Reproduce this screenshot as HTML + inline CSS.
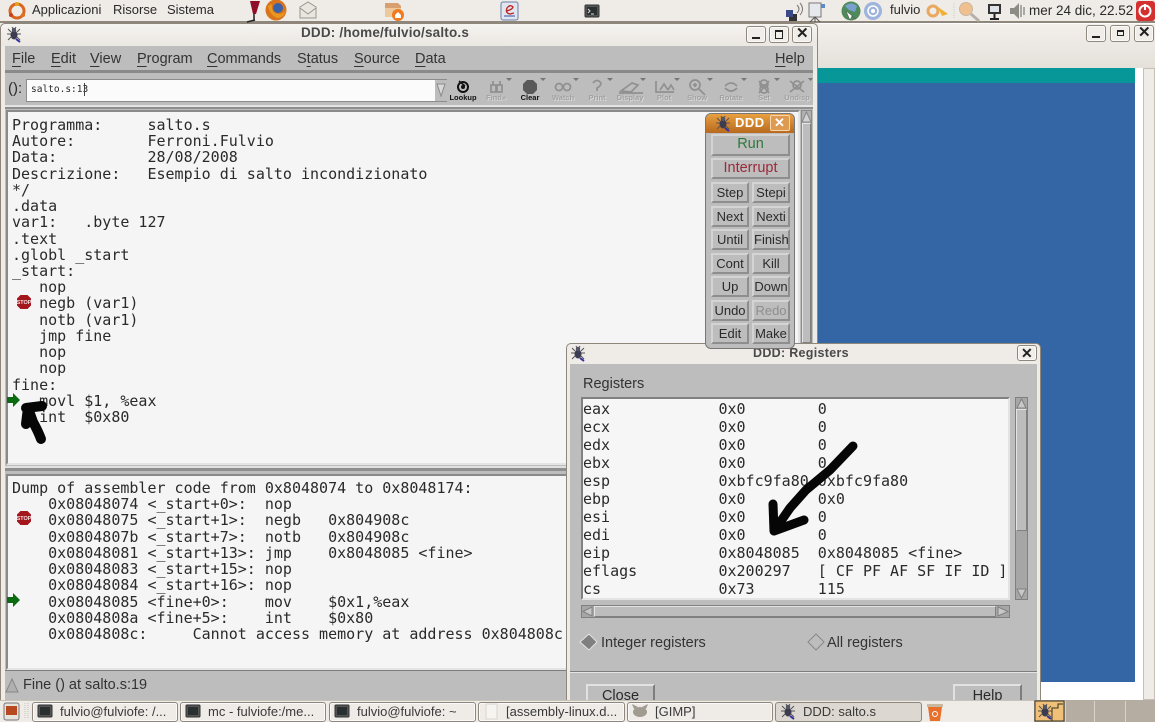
<!DOCTYPE html>
<html><head><meta charset="utf-8"><style>
html,body{margin:0;padding:0;background:#efebe7}
#r{position:relative;width:1155px;height:722px;overflow:hidden;background:#efebe7;font-family:"Liberation Sans",sans-serif;color:#2a2a2a}
#r div,#r pre,#r svg{position:absolute;margin:0;box-sizing:border-box}
.t{white-space:nowrap;line-height:16px}
pre{font-family:"DejaVu Sans Mono",monospace;font-size:15px;color:#2a2a2a}
.b{background:#bdbdbd;border:2px solid;border-color:#d4d4d4 #8e8e8e #8e8e8e #d4d4d4;text-align:center;font-size:13px;line-height:17px;color:#2a2a2a}
.wb{background:#f1eeea;border:1px solid #8e877d;border-radius:3px;box-shadow:inset 0 0 0 1px #fbfaf8}
.tb{top:702px;height:20px;background:#efebe7;border:1px solid #8e877d;border-radius:3px;box-shadow:inset 0 0 0 1px #fbfaf8;font-size:13px;line-height:18px;white-space:nowrap;color:#3a3a3a}
.tl{top:93px;width:44px;text-align:center;font-size:7.5px;font-weight:bold;line-height:9px;color:#a2a2a2;text-shadow:1px 1px 0 #d8d8d8}
.mn{top:51px;font-size:14.5px;color:#333}
u{text-underline-offset:3px}
</style></head><body><div id="r">

<!-- top panel -->
<div style="left:0;top:0;width:1155px;height:23px;background:#efebe7;border-bottom:2px solid #8f877b"></div>
<div class="t" style="left:32px;top:2px;font-size:13px">Applicazioni</div>
<div class="t" style="left:113px;top:2px;font-size:13px">Risorse</div>
<div class="t" style="left:167px;top:2px;font-size:13px">Sistema</div>
<div class="t" style="left:890px;top:2px;font-size:13px">fulvio</div>
<div class="t" style="left:1029px;top:3px;font-size:13.5px">mer 24 dic, 22.52</div>

<!-- back window -->
<div style="left:818px;top:23px;width:337px;height:677px;background:#fff"></div>
<div style="left:818px;top:24px;width:337px;height:44px;background:linear-gradient(#f3f0ec,#e4e0da)"></div>
<div style="left:818px;top:68px;width:317px;height:15px;background:#079799"></div>
<div style="left:818px;top:83px;width:317px;height:599px;background:#3465a4"></div>
<div style="left:1143px;top:68px;width:12px;height:632px;background:#efebe7;border:1px solid #c5c0b8"></div>
<div class="wb" style="left:1086px;top:25px;width:20px;height:17px"></div>
<div class="wb" style="left:1110px;top:25px;width:20px;height:17px"></div>
<div class="wb" style="left:1134px;top:25px;width:20px;height:17px"></div>
<div style="left:1092px;top:36px;width:8px;height:2px;background:#222"></div>
<div style="left:1117px;top:30px;width:7px;height:6px;border:1px solid #222;border-top-width:2px"></div>
<div class="t" style="left:1138px;top:25px;font-size:15px;font-weight:bold;color:#222">✕</div>

<!-- main window -->
<div style="left:0;top:23px;width:818px;height:679px;background:#efebe7;border:1px solid #8f877b;border-radius:5px 5px 0 0"></div>
<div style="left:1px;top:24px;width:816px;height:22px;background:linear-gradient(#f6f4f1,#ebe7e2);border-radius:5px 5px 0 0"></div>
<div class="t" style="left:301px;top:25px;width:200px;font-size:13.5px;font-weight:bold;color:#4a4a4a;letter-spacing:.18px">DDD: /home/fulvio/salto.s</div>
<div class="wb" style="left:746px;top:26px;width:20px;height:17px"></div>
<div class="wb" style="left:769px;top:26px;width:20px;height:17px"></div>
<div class="wb" style="left:792px;top:26px;width:20px;height:17px"></div>
<div style="left:752px;top:37px;width:8px;height:2px;background:#222"></div>
<div style="left:775px;top:30px;width:8px;height:9px;border:1px solid #222;border-top-width:2px"></div>
<div class="t" style="left:796px;top:26px;font-size:15px;font-weight:bold;color:#222">✕</div>

<div style="left:5px;top:46px;width:808px;height:654px;background:#bdbdbd"></div>
<div style="left:5px;top:70px;width:808px;height:3px;background:#8a8a8a"></div>
<div style="left:5px;top:105px;width:808px;height:2px;background:#e4e4e4"></div>
<div style="left:5px;top:107px;width:808px;height:2px;background:#8f8f8f"></div>
<div class="t mn" style="left:12px"><u>F</u>ile</div>
<div class="t mn" style="left:51px"><u>E</u>dit</div>
<div class="t mn" style="left:90px"><u>V</u>iew</div>
<div class="t mn" style="left:137px"><u>P</u>rogram</div>
<div class="t mn" style="left:207px"><u>C</u>ommands</div>
<div class="t mn" style="left:297px">S<u>t</u>atus</div>
<div class="t mn" style="left:354px"><u>S</u>ource</div>
<div class="t mn" style="left:415px"><u>D</u>ata</div>
<div class="t mn" style="left:775px"><u>H</u>elp</div>

<div class="t" style="left:8px;top:81px;font-size:15px">():</div>
<div style="left:26px;top:79px;width:421px;height:23px;background:#fbfbfb;border:1px solid #8c8c8c;border-right:0"></div>
<pre class="t" style="left:31px;top:82px;font-size:9.5px">salto.s:13</pre>
<div style="left:84px;top:83px;width:1px;height:13px;background:#444"></div>
<div style="left:435px;top:80px;width:12px;height:21px;background:#bdbdbd"></div>

<div class="tl" style="left:441px;color:#111;text-shadow:none">Lookup</div>
<div class="tl" style="left:474px">Find»</div>
<div class="tl" style="left:508px;color:#111;text-shadow:none">Clear</div>
<div class="tl" style="left:541px">Watch</div>
<div class="tl" style="left:575px">Print</div>
<div class="tl" style="left:608px">Display</div>
<div class="tl" style="left:642px">Plot</div>
<div class="tl" style="left:675px">Show</div>
<div class="tl" style="left:709px">Rotate</div>
<div class="tl" style="left:742px">Set</div>
<div class="tl" style="left:775px">Undisp</div>

<!-- source pane -->
<div style="left:6px;top:110px;width:794px;height:355px;background:#f5f5f5;border:2px solid;border-color:#8a8a8a #e4e4e4 #e4e4e4 #8a8a8a"></div>
<pre style="left:12px;top:117px;line-height:16.22px">Programma:     salto.s
Autore:        Ferroni.Fulvio
Data:          28/08/2008
Descrizione:   Esempio di salto incondizionato
*/
.data
var1:   .byte 127
.text
.globl _start
_start:
   nop
   negb (var1)
   notb (var1)
   jmp fine
   nop
   nop
fine:
   movl $1, %eax
   int  $0x80</pre>
<div style="left:801px;top:110px;width:11px;height:355px;background:#b0b0b0;border:1px solid #8a8a8a"></div>
<div style="left:802px;top:123px;width:9px;height:220px;background:#bdbdbd;border:1px solid;border-color:#e4e4e4 #808080 #808080 #e4e4e4"></div>
<div style="left:5px;top:466px;width:808px;height:2px;background:#e0e0e0"></div>
<div style="left:5px;top:468px;width:808px;height:3px;background:#8f8f8f"></div>

<!-- asm pane -->
<div style="left:6px;top:474px;width:794px;height:196px;background:#f5f5f5;border:2px solid;border-color:#8a8a8a #e4e4e4 #e4e4e4 #8a8a8a"></div>
<pre style="left:12px;top:480px;line-height:16.22px;width:552px;overflow:hidden">Dump of assembler code from 0x8048074 to 0x8048174:
    0x08048074 &lt;_start+0&gt;:  nop
    0x08048075 &lt;_start+1&gt;:  negb   0x804908c
    0x0804807b &lt;_start+7&gt;:  notb   0x804908c
    0x08048081 &lt;_start+13&gt;: jmp    0x8048085 &lt;fine&gt;
    0x08048083 &lt;_start+15&gt;: nop
    0x08048084 &lt;_start+16&gt;: nop
    0x08048085 &lt;fine+0&gt;:    mov    $0x1,%eax
    0x0804808a &lt;fine+5&gt;:    int    $0x80
    0x0804808c:     Cannot access memory at address 0x804808c</pre>
<div style="left:801px;top:474px;width:11px;height:196px;background:#b0b0b0;border:1px solid #8a8a8a"></div>
<div class="t" style="left:23px;top:677px;font-size:14.5px;color:#333">Fine () at salto.s:19</div>
<div style="left:5px;top:670px;width:808px;height:1px;background:#7d7d7d"></div>

<!-- registers window -->
<div style="left:566px;top:343px;width:475px;height:360px;background:#efebe7;border:1px solid #8f877b;border-radius:5px 5px 0 0"></div>
<div style="left:570px;top:364px;width:467px;height:338px;background:#bdbdbd"></div>
<div class="t" style="left:753px;top:345px;font-size:12.5px;font-weight:bold;color:#4a4a4a;letter-spacing:.3px">DDD: Registers</div>
<div class="wb" style="left:1017px;top:345px;width:20px;height:16px"></div>
<div class="t" style="left:1021px;top:345px;font-size:14px;font-weight:bold;color:#222">✕</div>
<div class="t" style="left:583px;top:376px;font-size:14.5px;color:#333">Registers</div>
<div style="left:581px;top:397px;width:429px;height:203px;background:#f6f6f6;border:2px solid;border-color:#808080 #e4e4e4 #e4e4e4 #808080"></div>
<pre style="left:583px;top:400px;line-height:18px;width:425px;overflow:hidden">eax            0x0        0
ecx            0x0        0
edx            0x0        0
ebx            0x0        0
esp            0xbfc9fa80 0xbfc9fa80
ebp            0x0        0x0
esi            0x0        0
edi            0x0        0
eip            0x8048085  0x8048085 &lt;fine&gt;
eflags         0x200297   [ CF PF AF SF IF ID ]
cs             0x73       115</pre>
<div style="left:1015px;top:397px;width:13px;height:203px;background:#a6a6a6;border:1px solid #808080"></div>
<div style="left:1016px;top:409px;width:11px;height:122px;background:#bdbdbd;border:1px solid;border-color:#e4e4e4 #808080 #808080 #e4e4e4"></div>
<div style="left:581px;top:605px;width:429px;height:13px;background:#a6a6a6;border:1px solid #808080"></div>
<div style="left:594px;top:606px;width:402px;height:11px;background:#bdbdbd;border:1px solid;border-color:#e4e4e4 #808080 #808080 #e4e4e4"></div>
<div class="t" style="left:601px;top:635px;font-size:14.5px;color:#333">Integer registers</div>
<div class="t" style="left:827px;top:635px;font-size:14.5px;color:#333">All registers</div>
<div style="left:570px;top:671px;width:467px;height:1px;background:#7d7d7d"></div>
<div style="left:570px;top:672px;width:467px;height:1px;background:#e4e4e4"></div>
<div class="b" style="left:586px;top:684px;width:69px;height:24px;line-height:21px;font-size:14.5px;border-color:#e2e2e2 #7d7d7d #7d7d7d #e2e2e2">Close</div>
<div class="b" style="left:953px;top:684px;width:69px;height:24px;line-height:21px;font-size:14.5px;border-color:#e2e2e2 #7d7d7d #7d7d7d #e2e2e2">Help</div>

<!-- DDD command tool -->
<div style="left:705px;top:113px;width:90px;height:236px;background:#bdbdbd;border:1px solid #777;border-radius:6px;overflow:hidden"></div>
<div style="left:706px;top:114px;width:88px;height:19px;background:linear-gradient(#e8a040,#b8691f);border-radius:5px 5px 0 0"></div>
<div class="t" style="left:735px;top:115px;font-size:13px;font-weight:bold;color:#fff;letter-spacing:.5px">DDD</div>
<div style="left:770px;top:115px;width:20px;height:16px;background:#dd9a50;border:1px solid #f4d8b0;border-radius:2px"></div>
<div class="t" style="left:774px;top:115px;font-size:13px;font-weight:bold;color:#fff">✕</div>
<div class="b" style="left:711px;top:134px;width:79px;height:22px;color:#2c7a3a;font-size:14.5px">Run</div>
<div class="b" style="left:711px;top:158px;width:79px;height:21px;color:#9a2a38;font-size:14.5px">Interrupt</div>
<div class="b" style="left:711px;top:182px;width:38px;height:21px">Step</div><div class="b" style="left:752px;top:182px;width:38px;height:21px">Stepi</div>
<div class="b" style="left:711px;top:206px;width:38px;height:21px">Next</div><div class="b" style="left:752px;top:206px;width:38px;height:21px">Nexti</div>
<div class="b" style="left:711px;top:229px;width:38px;height:21px">Until</div><div class="b" style="left:752px;top:229px;width:38px;height:21px">Finish</div>
<div class="b" style="left:711px;top:253px;width:38px;height:21px">Cont</div><div class="b" style="left:752px;top:253px;width:38px;height:21px">Kill</div>
<div class="b" style="left:711px;top:276px;width:38px;height:21px">Up</div><div class="b" style="left:752px;top:276px;width:38px;height:21px">Down</div>
<div class="b" style="left:711px;top:300px;width:38px;height:21px">Undo</div><div class="b" style="left:752px;top:300px;width:38px;height:21px;color:#8e8e8e">Redo</div>
<div class="b" style="left:711px;top:323px;width:38px;height:21px">Edit</div><div class="b" style="left:752px;top:323px;width:38px;height:21px">Make</div>

<!-- taskbar -->
<div style="left:0;top:700px;width:1155px;height:22px;background:#efebe7;border-top:1px solid #c8c2b8"></div>
<div class="tb" style="left:32px;width:146px;padding-left:27px">fulvio@fulviofe: /...</div>
<div class="tb" style="left:180px;width:146px;padding-left:27px">mc - fulviofe:/me...</div>
<div class="tb" style="left:329px;width:147px;padding-left:27px">fulvio@fulviofe: ~</div>
<div class="tb" style="left:478px;width:147px;padding-left:27px">[assembly-linux.d...</div>
<div class="tb" style="left:627px;width:146px;padding-left:27px">[GIMP]</div>
<div class="tb" style="left:775px;width:147px;padding-left:27px;background:#dcd7d0;box-shadow:none">DDD: salto.s</div>
<div style="left:1034px;top:700px;width:121px;height:22px;background:#b5aca2"></div>
<div style="left:1065px;top:701px;width:1px;height:21px;background:#d8d2ca"></div>
<div style="left:1094px;top:701px;width:1px;height:21px;background:#d8d2ca"></div>
<div style="left:1125px;top:701px;width:1px;height:21px;background:#d8d2ca"></div>

<svg width="1155" height="722" viewBox="0 0 1155 722" style="left:0;top:0">
<defs>
<g id="bug"><ellipse cx="0" cy="1" rx="3.5" ry="4.5" fill="#3c3c50"/><circle cx="0" cy="-4" r="2.2" fill="#55556a"/><path d="M-6-5L-3-2M6-5L3-2M-7 0H-3M7 0H3M-6 6L-3 3M6 6L3 3M-2-7L-1-5M2-7L1-5" stroke="#555" stroke-width="1" fill="none"/><path d="M2 5L6 8" stroke="#3030a0" stroke-width="2"/></g>
<g id="stop"><path d="M-3.5-7H3.5L7-3.5V3.5L3.5 7H-3.5L-7 3.5V-3.5Z" fill="#a3161c"/><text x="0" y="2" font-family="Liberation Sans" font-size="5.5" font-weight="bold" fill="#f4e0e0" text-anchor="middle">STOP</text></g>
<path id="go" d="M-6-3H0V-7L7 0L0 7V3H-6Z" fill="#0b6b12"/>
<g id="term"><rect x="-7" y="-6" width="14" height="12" rx="1" fill="#555" stroke="#333"/><rect x="-5" y="-4" width="10" height="8" fill="#2a2f2f"/></g>
</defs>

<!-- panel icons -->
<circle cx="17" cy="11" r="7" fill="none" stroke="#d9661f" stroke-width="3"/><circle cx="17" cy="4" r="2" fill="#e8a21c"/><circle cx="11" cy="15" r="2" fill="#c8401a"/><circle cx="23" cy="15" r="2" fill="#e07020"/>
<path d="M250 1H260L256 14H253Z" fill="#8e1028"/><path d="M254 14V21M247 22L255 20" stroke="#222" stroke-width="1.5"/>
<circle cx="276" cy="10" r="10.500" fill="#d9741c"/><circle cx="278" cy="8" r="5" fill="#3a62a8"/><path d="M268 6Q270 15 277 18Q284 18 286 10Q282 16 275 13Q271 10 272 4Z" fill="#e89820"/>
<path d="M300 7L308 2L316 7V18H300Z" fill="#e9e6e0" stroke="#9a958c"/><path d="M300 8L308 14L316 8" fill="none" stroke="#9a958c"/>
<path d="M385 3H398L401 6V17H385Z" fill="#d8a070"/><path d="M385 8H401V17H385Z" fill="#ecc89a"/><circle cx="398" cy="15" r="6" fill="#ef7a20"/><path d="M395 15L398 12L401 15V18H395Z" fill="#fff"/>
<rect x="501" y="2" width="17" height="18" rx="2" fill="#dfe6f0" stroke="#6a7ea8"/><path d="M506 11Q512 10 513 7Q510 4 507 8Q505 13 510 14L514 13" fill="none" stroke="#c02828" stroke-width="1.4"/><path d="M504 16H515" stroke="#3050a0"/>
<g transform="translate(592,11)"><use href="#term"/><path d="M-4-2L-2 0L-4 2M-1 3H2" stroke="#ddd" fill="none"/></g>
<rect x="789" y="14" width="8" height="7" fill="#333"/><rect x="786" y="10" width="7" height="7" fill="#3a4a88"/><path d="M797 5Q801 9 797 13M800 3Q805 9 800 15" fill="none" stroke="#777"/>
<rect x="809" y="3" width="12" height="14" fill="#e6e8ee" stroke="#777"/><rect x="821" y="4" width="4" height="4" fill="#5a8ac8"/><path d="M810 22L815 17L820 22M815 17V22" stroke="#555" fill="none"/>
<circle cx="851" cy="11" r="9.5" fill="#4f8a5a"/><path d="M845 6Q851 1 857 6L855 12L849 10Z" fill="#7aa0d0"/><path d="M846 11L850 20L852 16L856 19Z" fill="#fff" stroke="#555" stroke-width=".5"/>
<circle cx="873" cy="11" r="9" fill="#9db4dc"/><circle cx="873" cy="11" r="5" fill="none" stroke="#fff" stroke-width="1.5"/><circle cx="873" cy="11" r="2" fill="#fff"/>
<circle cx="933" cy="11" r="5" fill="none" stroke="#e8a860" stroke-width="3"/><path d="M938 7L948 14L942 16Z" fill="#f0b030"/>
<path d="M954 3V19" stroke="#ccc" stroke-dasharray="1 1"/>
<circle cx="966" cy="9" r="6.5" fill="#f0c090" stroke="#c8b8a0"/><path d="M971 14L979 21" stroke="#b8b0a8" stroke-width="3"/>
<rect x="988" y="4" width="13" height="10" fill="#333"/><rect x="990" y="6" width="9" height="6" fill="#dfe3e8"/><path d="M990 19H999M994.500 14V19" stroke="#222" stroke-width="2"/>
<path d="M1010 8H1014L1019 3V19L1014 14H1010Z" fill="#8c8c84"/><path d="M1021 5V17M1024 7V15" stroke="#666"/>
<rect x="1136" y="1" width="19" height="20" rx="3" fill="#d43030"/><circle cx="1145" cy="11" r="5.500" fill="none" stroke="#fff" stroke-width="2"/><path d="M1145 4V10" stroke="#fff" stroke-width="2"/>

<use href="#bug" transform="translate(14,34)"/>

<!-- toolbar icons -->
<circle cx="463" cy="87" r="5" fill="none" stroke="#111" stroke-width="2"/><circle cx="463" cy="87" r="2" fill="#111"/><path d="M459 81L465 86" stroke="#111" stroke-width="1.500"/>
<g fill="none" stroke="#909090" stroke-width="1.700"><path d="M491 85H496V92H491ZM497 85H502V92H497ZM493 81V85M500 81V85"/><circle cx="559" cy="87" r="3.500"/><circle cx="567" cy="87" r="3.500"/><path d="M593 83Q597 78 601 83Q601 86 597 88V91"/><path d="M621 91L632 83L638 85L631 92ZM619 93H643"/><path d="M656 81V92H674M660 90L664 84L668 90M668 90L671 85L674 90"/><circle cx="695" cy="85" r="5"/><path d="M699 89L705 95M693 85H697M695 83V87"/><path d="M725 86Q731 80 737 86M737 88Q731 94 725 88"/><circle cx="764" cy="84" r="4"/><circle cx="764" cy="89" r="4"/><path d="M759 81L769 93M769 81L759 93"/><circle cx="797" cy="85" r="4"/><path d="M790 81L804 92M804 81L790 92"/></g>
<g transform="translate(530,87)"><path d="M-3-7H3L7-3V3L3 7H-3L-7 3V-3Z" fill="#595959"/></g>
<path d="M506 78h6l-3 3zM540 78h6l-3 3zM573 78h6l-3 3zM607 78h6l-3 3zM640 78h6l-3 3zM674 78h6l-3 3zM707 78h6l-3 3zM741 78h6l-3 3zM774 78h6l-3 3zM808 78h5l-2.500 3z" fill="#777"/>
<path d="M437 84H445L441 96Z" fill="#d8d8d8" stroke="#8a8a8a"/>

<!-- scroll arrows -->
<path d="M806.500 112L811 122H802Z" fill="#d2d2d2" stroke="#888"/>
<path d="M1021.500 399L1026 408H1017Z" fill="#c8c8c8" stroke="#808080"/>
<path d="M1021.500 598L1026 589H1017Z" fill="#c8c8c8" stroke="#808080"/>
<path d="M583 611.500L592 607V616Z" fill="#c8c8c8" stroke="#808080"/>
<path d="M1008 611.500L998 607V616Z" fill="#c8c8c8" stroke="#808080"/>

<!-- margin glyphs -->
<use href="#stop" transform="translate(24,302)"/>
<use href="#stop" transform="translate(24,518)"/>
<use href="#go" transform="translate(13,400)"/>
<use href="#go" transform="translate(13,600)"/>

<!-- status triangle -->
<path d="M12 679L18 692H6Z" fill="#b0b0b0" stroke="#888"/>

<!-- DDD icons -->
<use href="#bug" transform="translate(723,123)"/>
<use href="#bug" transform="translate(578,353)"/>
<path d="M580 642L589 634L597 642L589 650Z" fill="#808080" stroke="#e4e4e4"/>
<path d="M808 642L816 634L824 642L816 650Z" fill="#bdbdbd" stroke="#888"/>

<!-- hand drawn arrows -->
<path d="M41 439Q38 431 33 422L28 408L26 424M26 408L42 406" fill="none" stroke="#060606" stroke-width="10" stroke-linecap="round" stroke-linejoin="round"/>
<path d="M853 446L830 470L806 490L790 508L774 531M773 504L774 531L804 520" fill="none" stroke="#060606" stroke-width="9" stroke-linecap="round" stroke-linejoin="round"/>

<!-- taskbar icons -->
<rect x="4" y="703" width="15" height="17" rx="2" fill="#e6e2dc" stroke="#777"/><rect x="6" y="706" width="11" height="9" fill="#b84820"/>
<path d="M25 703V719M28 703V719" stroke="#c8c2b8" stroke-dasharray="1 1"/>
<g transform="translate(45,711)"><use href="#term"/></g>
<g transform="translate(193,711)"><use href="#term"/></g>
<g transform="translate(342,711)"><use href="#term"/></g>
<rect x="486" y="704" width="11" height="15" fill="#f6f4f0" stroke="#d8d4cc"/>
<ellipse cx="640" cy="712" rx="7" ry="5" fill="#a09a90"/><path d="M634 709L632 704L638 707ZM646 709L648 704L642 707Z" fill="#a09a90"/>
<use href="#bug" transform="translate(788,711)"/>
<path d="M928 707H942L940 721H930Z" fill="#e8702a"/><rect x="927" y="704" width="16" height="3" fill="#c8b8a0"/><circle cx="935" cy="714" r="2.500" fill="none" stroke="#fff"/>
<rect x="1035" y="701" width="29" height="20" fill="#f0c078" stroke="#332"/><use href="#bug" transform="translate(1045,711)"/><path d="M1052 721V708H1058V704H1063" fill="none" stroke="#332"/>
</svg>
</div></body></html>
